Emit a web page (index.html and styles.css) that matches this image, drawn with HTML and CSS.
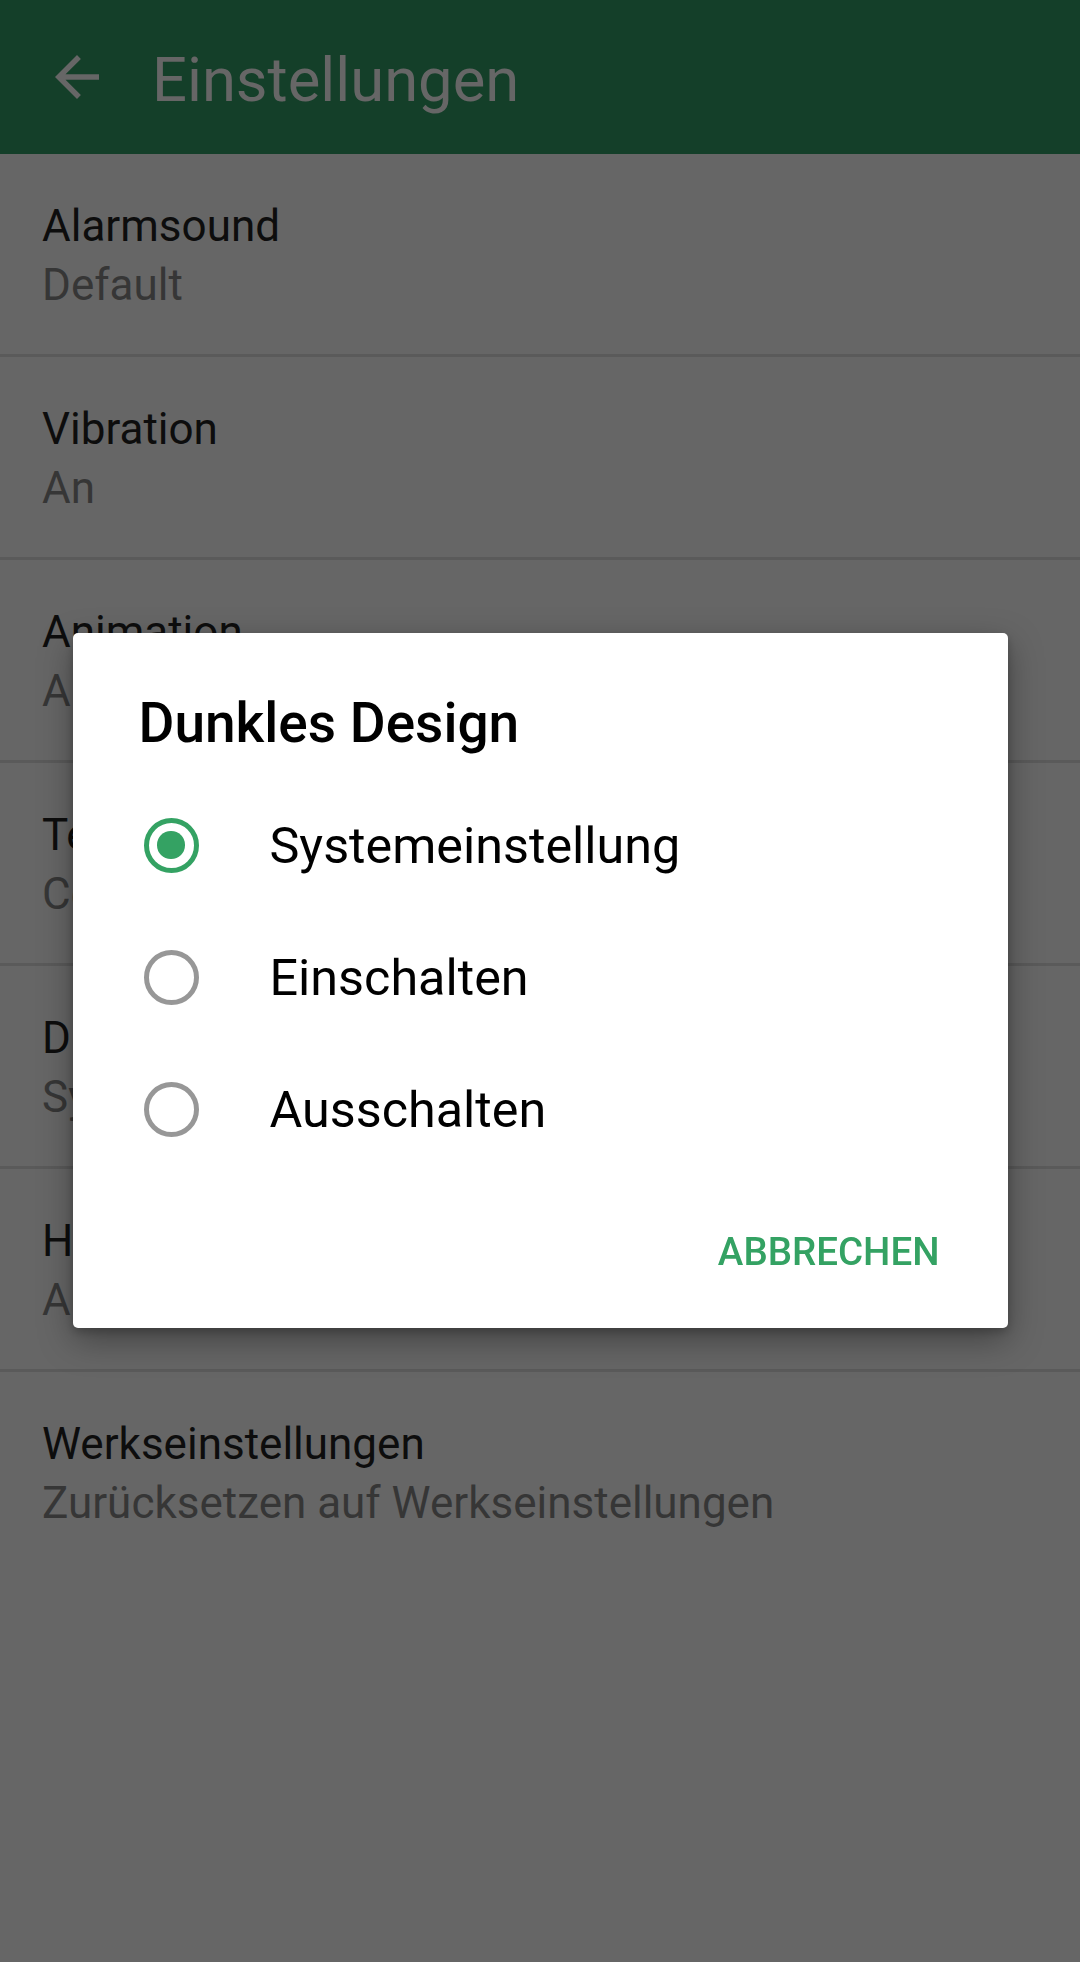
FILE: index.html
```html
<!DOCTYPE html>
<html lang="de">
<head>
<meta charset="utf-8">
<title>Einstellungen</title>
<link rel="stylesheet" href="styles.css">
</head>
<body>
<header class="appbar">
  <span class="nav-icon">
    <svg viewBox="0 0 24 24" width="66" height="66"><path d="M20 11H7.83l5.59-5.59L12 4l-8 8 8 8 1.41-1.41L7.83 13H20v-2z" fill="#666666"/></svg>
  </span>
  <h1 class="appbar-title">Einstellungen</h1>
</header>
<main class="list">
  <div class="item"><div class="item-title">Alarmsound</div><div class="item-sub">Default</div></div>
  <div class="item"><div class="item-title">Vibration</div><div class="item-sub">An</div></div>
  <div class="item"><div class="item-title">Animation</div><div class="item-sub">An</div></div>
  <div class="item"><div class="item-title">Temperatur</div><div class="item-sub">Celsius</div></div>
  <div class="item"><div class="item-title">Dunkles Design</div><div class="item-sub">Systemeinstellung</div></div>
  <div class="item"><div class="item-title">Helligkeit</div><div class="item-sub">Automatisch</div></div>
  <div class="item"><div class="item-title">Werkseinstellungen</div><div class="item-sub">Zurücksetzen auf Werkseinstellungen</div></div>
</main>
<div class="overlay">
  <div class="dialog">
    <h2 class="dialog-title">Dunkles Design</h2>
    <div class="options">
      <div class="option"><span class="radio checked"></span><span class="option-label">Systemeinstellung</span></div>
      <div class="option"><span class="radio"></span><span class="option-label">Einschalten</span></div>
      <div class="option"><span class="radio"></span><span class="option-label">Ausschalten</span></div>
    </div>
    <div class="actions"><span class="btn">ABBRECHEN</span></div>
  </div>
</div>
</body>
</html>
```
FILE: styles.css
```css
html, body {
  margin: 0;
  padding: 0;
}
body {
  width: 1080px;
  height: 1962px;
  background: #666666;
  font-family: Roboto, "Noto Sans", sans-serif;
  overflow: hidden;
}
.appbar {
  height: 154px;
  background: #143f29;
  display: flex;
  align-items: center;
}
.nav-icon {
  width: 66px;
  height: 66px;
  margin-left: 44px;
  display: block;
}
.nav-icon svg { display: block; }
.appbar-title {
  margin: 0 0 0 42px;
  font-size: 61.5px;
  font-weight: 400;
  color: #666666;
  line-height: 66px;
  padding-top: 6px;
}
.list {
  display: flex;
  flex-direction: column;
}
.item {
  height: 200px;
  box-sizing: content-box;
  border-bottom: 3px solid #5a5a5a;
  padding: 0 42px;
  display: flex;
  flex-direction: column;
}
.item-title {
  margin-top: 43px;
  font-size: 44px;
  line-height: 59px;
  color: #0d0d0d;
}
.item-sub {
  font-size: 44px;
  line-height: 59px;
  color: #363636;
}
.item:last-child { border-bottom: none; }
.overlay {
  position: fixed;
  inset: 0;
  display: flex;
  justify-content: center;
  align-items: flex-start;
  padding-top: 633px;
}
.dialog {
  width: 935px;
  height: 695px;
  background: #ffffff;
  border-radius: 5px;
  box-shadow: 0 12px 34px rgba(0,0,0,0.35), 0 4px 10px rgba(0,0,0,0.2);
  display: flex;
  flex-direction: column;
}
.dialog-title {
  margin: 0;
  padding: 58px 0 0 66px;
  font-size: 55px;
  font-weight: 500;
  line-height: 64px;
  color: #000000;
}
.options {
  margin-top: 24px;
  display: flex;
  flex-direction: column;
}
.option {
  height: 132px;
  display: flex;
  align-items: center;
  padding-left: 71px;
}
.radio {
  width: 55px;
  height: 55px;
  box-sizing: border-box;
  border: 5.5px solid #979797;
  border-radius: 50%;
  display: flex;
  align-items: center;
  justify-content: center;
  flex: none;
}
.radio.checked {
  border-color: #34a263;
}
.radio.checked::after {
  content: "";
  width: 27.5px;
  height: 27.5px;
  border-radius: 50%;
  background: #34a263;
}
.option-label {
  margin-left: 71px;
  font-size: 50.3px;
  color: #000000;
}
.actions {
  flex: 1;
  display: flex;
  align-items: center;
  justify-content: flex-end;
  padding-right: 68px;
}
.btn {
  font-size: 38.5px;
  font-weight: 500;
  color: #34a263;
}
```
